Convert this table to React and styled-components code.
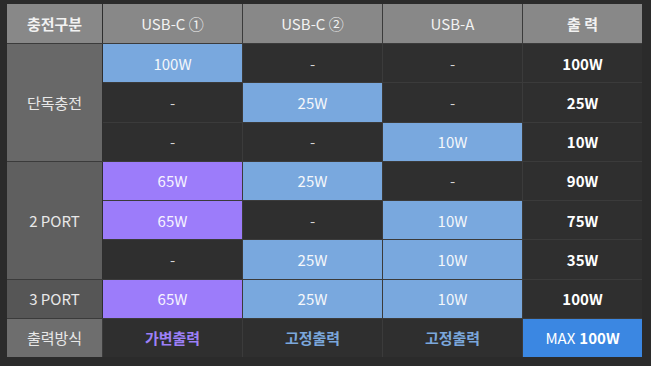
import styled, { createGlobalStyle } from "styled-components";

const GlobalStyle = createGlobalStyle`
  body {
    margin: 0;
    background-color: #2b2b2b;
  }
`;

const Page = styled.div`
  width: 651px;
  height: 366px;
  box-sizing: border-box;
  padding: 4px 7px;
  background-color: #2b2b2b;
  font-family: "Noto Sans CJK KR", "Noto Sans", sans-serif;
`;

const Table = styled.div`
  display: grid;
  grid-template-columns: 95px 139px 139px 139px 119px;
  grid-template-rows: 39px repeat(8, 38.25px);
  gap: 1px;
  background-color: #3b3b3b;
  width: 635px;
`;

const colors = {
  head: { bg: "#888888", fg: "#f2f2f2" },
  label: { bg: "#686868", fg: "#e8e8e8" },
  dark: { bg: "#2f2f2f", fg: "#d6d6d6" },
  blue: { bg: "#79a8de", fg: "#f4f7fb" },
  purple: { bg: "#9c7cfa", fg: "#f6f3ff" },
  out: { bg: "#2f2f2f", fg: "#ffffff" },
  max: { bg: "#3b87e2", fg: "#ffffff" },
};

const Cell = styled.div`
  display: flex;
  align-items: center;
  justify-content: center;
  font-size: 15px;
  background-color: ${(p) => p.$bg || colors[p.$kind].bg};
  color: ${(p) => p.$fg || colors[p.$kind].fg};
  font-weight: ${(p) => (p.$bold ? 700 : 400)};
  grid-row: ${(p) => (p.$span ? `span ${p.$span}` : "auto")};
  border-right: ${(p) => (p.$edge ? "1px solid #2e2e2e" : "none")};
  margin-right: ${(p) => (p.$edge ? "-1px" : "0")};
`;

const Strong = styled.b`
  font-weight: 700;
  margin-left: 4px;
`;

const rows = [
  [["blue", "100W"], ["dark", "-"], ["dark", "-"], "100W"],
  [["dark", "-"], ["blue", "25W"], ["dark", "-"], "25W"],
  [["dark", "-"], ["dark", "-"], ["blue", "10W"], "10W"],
  [["purple", "65W"], ["blue", "25W"], ["dark", "-"], "90W"],
  [["purple", "65W"], ["dark", "-"], ["blue", "10W"], "75W"],
  [["dark", "-"], ["blue", "25W"], ["blue", "10W"], "35W"],
  [["purple", "65W"], ["blue", "25W"], ["blue", "10W"], "100W"],
];

const labels = {
  0: { text: "단독충전", span: 3, bg: "#686868" },
  3: { text: "2 PORT", span: 3, bg: "#5f5f5f" },
  6: { text: "3 PORT", span: 1, bg: "#565656" },
};

export default function App() {
  return (
    <>
      <GlobalStyle />
      <Page>
        <Table>
          <Cell $kind="head" $bold $edge>충전구분</Cell>
          <Cell $kind="head">USB-C ①</Cell>
          <Cell $kind="head">USB-C ②</Cell>
          <Cell $kind="head">USB-A</Cell>
          <Cell $kind="head" $bold>출 력</Cell>

          {rows.map((row, i) => (
            <Row key={i} index={i} row={row} />
          ))}

          <Cell $kind="label" $bg="#6e6e6e">출력방식</Cell>
          <Cell $kind="dark" $fg="#9d80f8" $bold>가변출력</Cell>
          <Cell $kind="dark" $fg="#7ba7dc" $bold>고정출력</Cell>
          <Cell $kind="dark" $fg="#7ba7dc" $bold>고정출력</Cell>
          <Cell $kind="max">
            MAX<Strong>100W</Strong>
          </Cell>
        </Table>
      </Page>
    </>
  );
}

function Row({ index, row }) {
  const label = labels[index];
  return (
    <>
      {label && (
        <Cell $kind="label" $bg={label.bg} $span={label.span} $edge>
          {label.text}
        </Cell>
      )}
      {row.slice(0, 3).map(([kind, text], j) => (
        <Cell key={j} $kind={kind}>
          {text}
        </Cell>
      ))}
      <Cell $kind="out" $bold>
        {row[3]}
      </Cell>
    </>
  );
}
